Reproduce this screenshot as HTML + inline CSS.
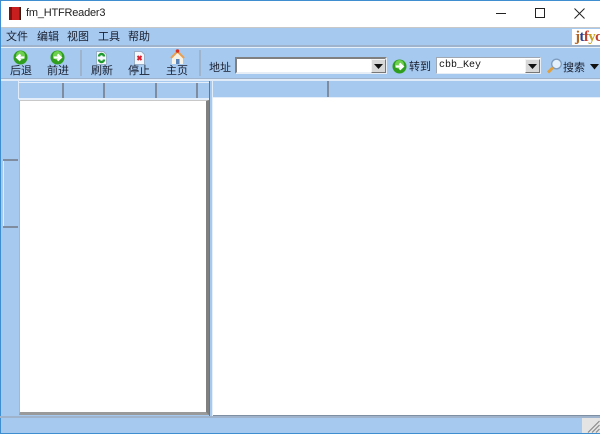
<!DOCTYPE html>
<html><head><meta charset="utf-8">
<style>
html,body{margin:0;padding:0}
body{width:600px;height:434px;overflow:hidden;position:relative;background:#a6c9ef;font-family:"Liberation Sans","Noto Sans CJK SC",sans-serif;color:#111}
div,span,svg{position:absolute;box-sizing:border-box}
.t{font-size:11px;line-height:14px;white-space:nowrap;color:#1a2030}
.w{text-align:center;width:36px}
.r{background:#fff}
</style></head><body>
<!-- title bar -->
<div class="r" style="left:0;top:0;width:600px;height:27px"></div>
<div style="left:0;top:0;width:600px;height:1px;background:#3f8fd0"></div>
<svg style="left:8px;top:6px" width="14" height="15" viewBox="0 0 14 15"><rect x="1" y="1" width="12" height="13" fill="#c81e1e"/><rect x="1" y="1" width="3" height="13" fill="#7a1210"/><rect x="11.500" y="1" width="1.500" height="13" fill="#3a1a10"/></svg>
<div style="left:26px;top:6px;font-size:11px;letter-spacing:-0.2px;line-height:15px;white-space:nowrap;color:#222">fm_HTFReader3</div>
<div style="left:496px;top:13px;width:10px;height:1px;background:#222"></div>
<div style="left:535px;top:8px;width:10px;height:10px;border:1px solid #222"></div>
<svg style="left:574px;top:8px" width="11" height="11" viewBox="0 0 11 11"><path d="M.5.5L10.500 10.500M10.500.5L.5 10.500" stroke="#222" stroke-width="1" fill="none"/></svg>
<div style="left:0;top:27px;width:600px;height:1px;background:#c8c8c8"></div>
<!-- menu -->
<div style="left:0;top:28px;width:600px;height:17px;background:#a6c9ef"></div>
<div class="t" style="left:6px;top:30px">文件</div>
<div class="t" style="left:37px;top:30px">编辑</div>
<div class="t" style="left:67px;top:30px">视图</div>
<div class="t" style="left:98px;top:30px">工具</div>
<div class="t" style="left:128px;top:30px">帮助</div>
<div class="r" style="left:572px;top:29px;width:28px;height:16px;overflow:hidden"><span style="left:3px;top:-1px;font-family:'Liberation Serif',serif;font-size:15px;letter-spacing:-0.6px;line-height:18px;font-weight:bold;white-space:nowrap"><span style="position:static;color:#b5651d">j</span><span style="position:static;color:#2a3f8f">t</span><span style="position:static;color:#c04030">f</span><span style="position:static;color:#c8a020">y</span><span style="position:static;color:#c04030">c</span><span style="position:static;color:#3a9a50">s</span></span></div>
<div style="left:0;top:45px;width:600px;height:2px;background:#9fb4cc"></div>
<div style="left:0;top:47px;width:600px;height:1px;background:#e6f0fa"></div>
<!-- toolbar -->
<svg style="left:13px;top:50px" width="15" height="15" viewBox="0 0 15 15"><circle cx="7.500" cy="7.500" r="7" fill="#2f9e1f"/><circle cx="7.500" cy="5.500" r="4.500" fill="#6fd04f"/><path d="M11.500 7.500H5M7.500 4.500L4.200 7.500L7.500 10.500" stroke="#fff" stroke-width="2.200" fill="none"/></svg>
<div class="t w" style="left:3px;top:64px">后退</div>
<svg style="left:50px;top:50px" width="15" height="15" viewBox="0 0 15 15"><circle cx="7.500" cy="7.500" r="7" fill="#2f9e1f"/><circle cx="7.500" cy="5.500" r="4.500" fill="#6fd04f"/><path d="M3.500 7.500H10M7.500 4.500L10.800 7.500L7.500 10.500" stroke="#fff" stroke-width="2.200" fill="none"/></svg>
<div class="t w" style="left:40px;top:64px">前进</div>
<div style="left:80px;top:50px;width:2px;height:26px;background:#9fb4cc"></div>
<svg style="left:96px;top:51px" width="11" height="14" viewBox="0 0 11 14"><path d="M.5.5H7.500L10.500 3.500V13.500H.5Z" fill="#f4f8fc" stroke="#9ab0c8"/><path d="M3 5.500A2.500 2.500 0 0 1 8 5.500M8 8.500A2.500 2.500 0 0 1 3 8.500" stroke="#1f9a2f" stroke-width="2.400" fill="none"/></svg>
<div class="t w" style="left:84px;top:64px">刷新</div>
<svg style="left:134px;top:51px" width="11" height="14" viewBox="0 0 11 14"><path d="M.5.5H7.500L10.500 3.500V13.500H.5Z" fill="#f4f8fc" stroke="#9ab0c8"/><path d="M3.500 5L7.500 9M7.500 5L3.500 9" stroke="#d81f2f" stroke-width="2" fill="none"/></svg>
<div class="t w" style="left:121px;top:64px">停止</div>
<svg style="left:169px;top:49px" width="17" height="16" viewBox="0 0 17 16"><path d="M3 8V15H14V8L8.500 3Z" fill="#f6f2e6"/><path d="M2 9L8.500 2.500L15 9" stroke="#e8a050" stroke-width="2" fill="none"/><rect x="7" y="10" width="3.500" height="5" fill="#5a83b8"/><circle cx="8.500" cy="2" r="1.800" fill="#d83020"/></svg>
<div class="t w" style="left:159px;top:64px">主页</div>
<div style="left:199px;top:50px;width:2px;height:26px;background:#9fb4cc"></div>
<div class="t" style="left:209px;top:61px">地址</div>
<div class="r" style="left:235px;top:57px;width:152px;height:17px;border:2px solid;border-color:#808080 #e8eef5 #e8eef5 #808080"></div>
<div style="left:371px;top:59px;width:15px;height:14px;background:#d8d8d8;border:1px solid;border-color:#f4f4f4 #777 #777 #f4f4f4"></div>
<svg style="left:374px;top:64px" width="9" height="5" viewBox="0 0 9 5"><path d="M0 0H9L4.500 5Z" fill="#111"/></svg>
<svg style="left:392px;top:59px" width="15" height="15" viewBox="0 0 15 15"><circle cx="7.500" cy="7.500" r="7" fill="#2f9e1f"/><circle cx="7.500" cy="5.500" r="4.500" fill="#6fd04f"/><path d="M3.500 7.500H10M7.500 4.500L10.800 7.500L7.500 10.500" stroke="#fff" stroke-width="2.200" fill="none"/></svg>
<div class="t" style="left:409px;top:60px">转到</div>
<div class="r" style="left:436px;top:57px;width:105px;height:17px;border:1px solid;border-color:#a0a8b4 #e8eef5 #e8eef5 #a0a8b4"></div>
<div style="left:439px;top:59px;font-family:'Liberation Mono','DejaVu Sans Mono',monospace;font-size:10px;line-height:14px;white-space:nowrap;color:#111">cbb_Key</div>
<div style="left:525px;top:59px;width:15px;height:14px;background:#d8d8d8;border:1px solid;border-color:#f4f4f4 #777 #777 #f4f4f4"></div>
<svg style="left:528px;top:64px" width="9" height="5" viewBox="0 0 9 5"><path d="M0 0H9L4.500 5Z" fill="#111"/></svg>
<svg style="left:546px;top:58px" width="17" height="16" viewBox="0 0 17 16"><circle cx="10.500" cy="6" r="4.800" fill="#e4f0fb" stroke="#7f9dbf" stroke-width="1.300"/><path d="M7 9.500L2 14.500" stroke="#e0a040" stroke-width="3"/></svg>
<div class="t" style="left:563px;top:61px">搜索</div>
<svg style="left:590px;top:64px" width="9" height="6" viewBox="0 0 9 6"><path d="M0 0H9L4.500 5.500Z" fill="#111"/></svg>
<div style="left:0;top:78px;width:600px;height:1px;background:#9fb4cc"></div>
<div style="left:0;top:79px;width:600px;height:2px;background:#dfebf8"></div>
<!-- left edge -->
<div style="left:0;top:0;width:1px;height:434px;background:#3f8fd0"></div>
<div style="left:3px;top:159px;width:15px;height:2px;background:#7f8ca0"></div>
<div style="left:3px;top:161px;width:1px;height:65px;background:#e0ecf8"></div>
<div style="left:3px;top:226px;width:15px;height:2px;background:#7f8ca0"></div>
<!-- left panel -->
<div style="left:18px;top:81px;width:1px;height:18px;background:#dfebf8"></div>
<div style="left:19px;top:82px;width:191px;height:1px;background:#e4eefa"></div>
<div style="left:62px;top:83px;width:2px;height:15px;background:#7f8ca0"></div>
<div style="left:103px;top:83px;width:2px;height:15px;background:#7f8ca0"></div>
<div style="left:155px;top:83px;width:2px;height:15px;background:#7f8ca0"></div>
<div style="left:196px;top:83px;width:2px;height:15px;background:#7f8ca0"></div>
<div style="left:19px;top:98px;width:191px;height:2px;background:#e4eefa"></div>
<div class="r" style="left:19px;top:100px;width:190px;height:315px;border-left:1px solid #b4b4b4;border-top:1px solid #c8c8c8;border-right:3px solid #808080;border-bottom:3px solid #9a9a9a"></div>
<div style="left:209px;top:81px;width:1px;height:335px;background:#6a7686"></div>
<!-- right panel -->
<div style="left:212px;top:81px;width:1px;height:335px;background:#e4eefa"></div>
<div style="left:327px;top:81px;width:2px;height:17px;background:#7f8ca0"></div>
<div style="left:213px;top:97px;width:387px;height:1px;background:#e4eefa"></div>
<div class="r" style="left:213px;top:98px;width:387px;height:317px"></div>
<div style="left:213px;top:415px;width:387px;height:1px;background:#7f8fa3"></div>
<!-- status bar -->
<div style="left:0;top:416px;width:600px;height:2px;background:#9fb4cc"></div>
<div style="left:0;top:433px;width:600px;height:1px;background:#3f8fd0"></div>
<div style="left:582px;top:418px;width:18px;height:15px;background:#e4e4e4"></div>
<svg style="left:586px;top:419px" width="14" height="14" viewBox="0 0 14 14"><path d="M13.500 2L2 13.500M13.500 6L6 13.500M13.500 10L10 13.500" stroke="#8a8a8a" stroke-width="1.200" fill="none"/></svg>
</body></html>
